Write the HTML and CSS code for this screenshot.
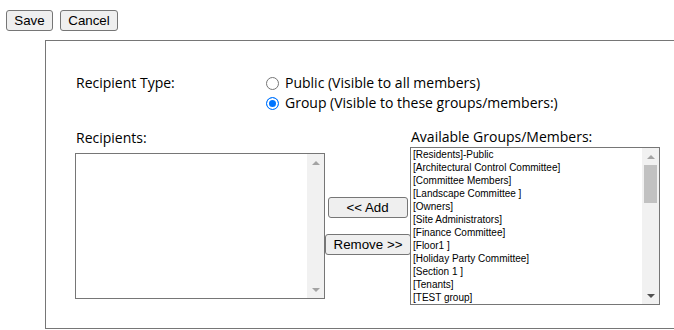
FILE: index.html
```html
<!DOCTYPE html>
<html>
<head>
<meta charset="utf-8">
<link rel="stylesheet" href="styles.css">
</head>
<body>
<div class="toolbar">
  <button class="btn btn-save">Save</button>
  <button class="btn btn-cancel">Cancel</button>
</div>
<div class="panel">
  <div class="type-row">
    <div class="label type-label">Recipient Type:</div>
    <div class="radios">
      <label class="opt"><input type="radio" name="rt" class="radio"><span>Public (Visible to all members)</span></label>
      <label class="opt"><input type="radio" name="rt" class="radio" checked><span>Group (Visible to these groups/members:)</span></label>
    </div>
  </div>
  <div class="pick-row">
    <div class="col col-left">
      <div class="label">Recipients:</div>
      <div class="listbox listbox-left">
        <div class="items"></div>
        <div class="sbar">
          <span class="sbtn"><span class="tri tri-up tri-light"></span></span>
          <span class="strack"></span>
          <span class="sbtn"><span class="tri tri-down tri-light"></span></span>
        </div>
      </div>
    </div>
    <div class="col col-mid">
      <button class="btn btn-add">&lt;&lt; Add</button>
      <button class="btn btn-remove">Remove &gt;&gt;</button>
    </div>
    <div class="col col-right">
      <div class="label">Available Groups/Members:</div>
      <div class="listbox listbox-right">
        <div class="items">
          <div class="item">[Residents]-Public</div>
          <div class="item">[Architectural Control Committee]</div>
          <div class="item">[Committee Members]</div>
          <div class="item">[Landscape Committee ]</div>
          <div class="item">[Owners]</div>
          <div class="item">[Site Administrators]</div>
          <div class="item">[Finance Committee]</div>
          <div class="item">[Floor1 ]</div>
          <div class="item">[Holiday Party Committee]</div>
          <div class="item">[Section 1 ]</div>
          <div class="item">[Tenants]</div>
          <div class="item">[TEST group]</div>
        </div>
        <div class="sbar">
          <span class="sbtn"><span class="tri tri-up tri-light"></span></span>
          <span class="strack"><span class="thumb"></span></span>
          <span class="sbtn"><span class="tri tri-down tri-dark"></span></span>
        </div>
      </div>
    </div>
  </div>
</div>
</body>
</html>
```
FILE: styles.css
```css
html, body {
  margin: 0;
  padding: 0;
  overflow: hidden;
  background: #fff;
}

body {
  width: 674px;
  height: 330px;
  color: #000;
}

.toolbar {
  display: flex;
  gap: 7px;
  padding: 10px 0 0 6px;
}

.btn {
  box-sizing: border-box;
  height: 21px;
  margin: 0;
  padding: 0 7px;
  font-family: "Liberation Sans", Arial, sans-serif;
  font-size: 13.333px;
  line-height: 19px;
  color: #000;
  background: #efefef;
  border: 1px solid #767676;
  border-radius: 3px;
}

.btn-save { width: 47px; }
.btn-cancel { width: 58px; }

.panel {
  box-sizing: border-box;
  width: 629px;
  height: 289px;
  margin: 9px 0 0 45px;
  padding: 32px 0 0 29px;
  border: 1px solid #767676;
  border-right: none;
}

.label {
  font-family: "Open Sans", "Noto Sans", sans-serif;
  font-size: 14px;
  line-height: 20px;
  padding-left: 1px;
}

.type-row {
  display: flex;
}

.type-label {
  width: 190px;
}

.radios {
  display: flex;
  flex-direction: column;
}

.opt {
  display: flex;
  align-items: center;
  gap: 6px;
  height: 20px;
  font-family: "Open Sans", "Noto Sans", sans-serif;
  font-size: 14px;
  line-height: 20px;
}

.radio {
  appearance: none;
  -webkit-appearance: none;
  box-sizing: border-box;
  width: 13px;
  height: 13px;
  margin: 0;
  border: 1px solid #767676;
  border-radius: 50%;
  background: #fff;
}

.radio:checked {
  border-color: #0075ff;
  background: #0075ff;
  box-shadow: inset 0 0 0 2px #fff;
}

.pick-row {
  display: flex;
  margin-top: 14px;
}

.col-left {
  width: 250px;
  padding-top: 1px;
}

.col-left .listbox {
  margin-top: 5px;
  height: 146px;
}

.col-mid {
  width: 85px;
  display: flex;
  flex-direction: column;
  align-items: center;
  padding-top: 70px;
  gap: 16px;
}

.btn-add { width: 80px; }
.btn-remove { width: 86px; margin-left: 1px; }

.col-right {
  width: 250px;
}

.listbox {
  box-sizing: border-box;
  display: flex;
  border: 1px solid #767676;
  background: #fff;
}

.listbox-right {
  height: 158px;
}

.items {
  flex: 1;
  overflow: hidden;
}

.item {
  height: 13px;
  padding: 0 2px;
  font-family: "Liberation Sans", Arial, sans-serif;
  font-size: 10px;
  line-height: 13px;
  white-space: nowrap;
}

.sbar {
  width: 17px;
  display: flex;
  flex-direction: column;
  background: #f1f1f1;
}

.sbtn {
  height: 17px;
  display: flex;
  align-items: center;
  justify-content: center;
}

.strack {
  flex: 1;
  position: relative;
}

.thumb {
  position: absolute;
  top: 0;
  left: 2px;
  width: 13px;
  height: 38px;
  background: #c1c1c1;
}

.tri {
  width: 0;
  height: 0;
  border-left: 4px solid transparent;
  border-right: 4px solid transparent;
}

.tri-up { border-bottom: 4px solid #a3a3a3; }
.tri-down { border-top: 4px solid #a3a3a3; }
.tri-down.tri-dark { border-top-color: #505050; }
```
